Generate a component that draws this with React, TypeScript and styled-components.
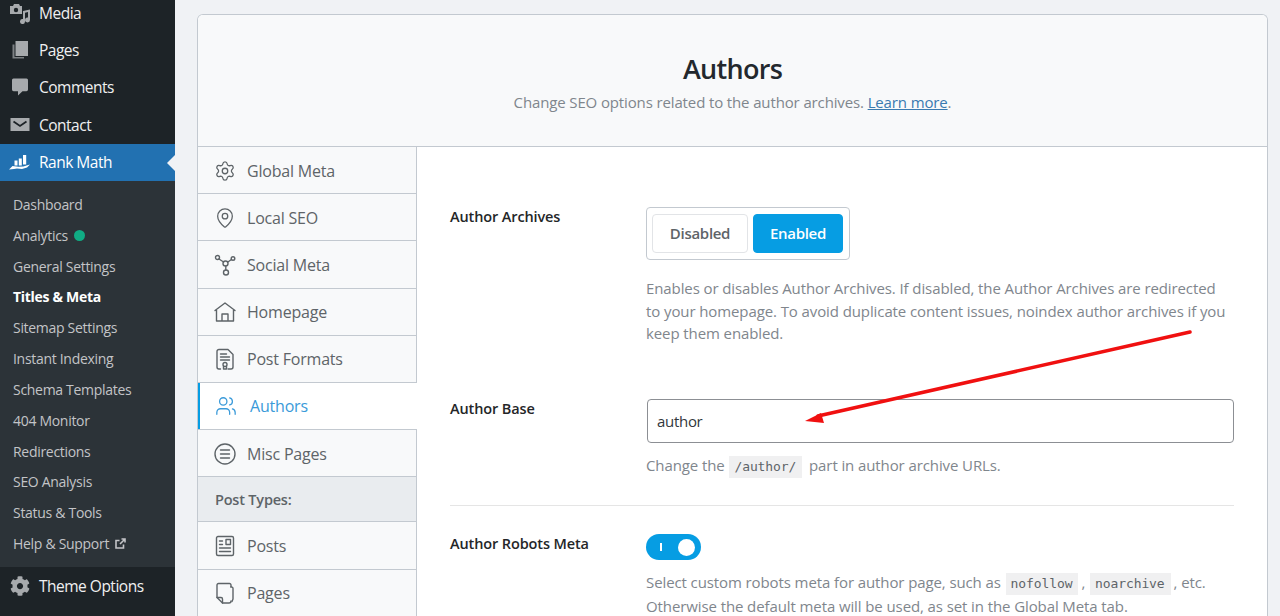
import React from 'react'
import styled, { createGlobalStyle } from 'styled-components'
import { Settings, MapPin, Users } from 'lucide-react'
import { FaCog } from 'react-icons/fa'

const Global = createGlobalStyle`
  html, body { margin: 0; padding: 0; height: 616px; overflow: hidden; background: #f0f2f5; }
  * { box-sizing: border-box; }
  body { font-family: "Open Sans", "Noto Sans", sans-serif; }
`

const Shell = styled.div`
  position: relative;
  display: flex;
  height: 616px;
  overflow: hidden;
`

const Sidebar = styled.nav`
  width: 175px;
  flex: none;
  background: #1d2327;
  margin-top: -6px;
  height: 622px;
  overflow: hidden;
`

const MainItem = styled.div<{ $active?: boolean }>`
  position: relative;
  display: flex;
  align-items: center;
  height: 37.4px;
  padding-left: 39px;
  font-size: 15.5px;
  letter-spacing: -0.5px;
  color: #f0f0f1;
  background: ${p => (p.$active ? '#2271b1' : 'transparent')};
  ${p => p.$active && `color: #fff;`}
  &::after {
    content: '';
    display: ${p => (p.$active ? 'block' : 'none')};
    position: absolute;
    right: 0;
    top: 11px;
    border: 8px solid transparent;
    border-right-color: #f0f2f5;
    border-left-width: 0;
  }
`

const MainIcon = styled.span`
  position: absolute;
  left: 9px;
  top: 0;
  bottom: 0;
  width: 22px;
  display: flex;
  align-items: center;
  justify-content: center;
  color: #a7aaad;
`

const SubMenu = styled.div`
  background: #2c3338;
  padding: 8px 0;
`

const SubItem = styled.div<{ $current?: boolean }>`
  display: flex;
  align-items: center;
  gap: 6px;
  height: 30.85px;
  padding-left: 13px;
  font-size: 14px;
  letter-spacing: -0.3px;
  color: ${p => (p.$current ? '#fff' : '#c3c4c7')};
  font-weight: ${p => (p.$current ? 700 : 400)};
`

const Dot = styled.span`
  width: 11px;
  height: 11px;
  border-radius: 50%;
  background: #10ac84;
`

const Main = styled.main`
  flex: 1;
  padding: 14px 12px 0 22px;
  background: #f0f2f5;
`

const Panel = styled.section`
  border: 1px solid #c3c9d0;
  border-bottom: 0;
  border-radius: 6px 6px 0 0;
  background: #fff;
  height: 640px;
  overflow: hidden;
`

const Header = styled.header`
  height: 132px;
  background: #f8f9fa;
  border-bottom: 1px solid #c3c9d0;
  text-align: center;
  padding-top: 36px;
`

const Title = styled.h1`
  margin: 0;
  font-size: 27px;
  line-height: 36px;
  font-weight: 600;
  letter-spacing: -0.7px;
  color: #23282d;
`

const Lead = styled.p`
  margin: 4px 0 0;
  font-size: 15px;
  line-height: 22px;
  letter-spacing: -0.13px;
  color: #7f868d;
  & a { color: #3a7ab0; text-decoration: underline; }
`

const Body = styled.div`
  display: flex;
`

const Tabs = styled.div`
  width: 219px;
  flex: none;
  border-right: 1px solid #c3c9d0;
`

const Tab = styled.div<{ $active?: boolean }>`
  position: relative;
  display: flex;
  align-items: center;
  gap: ${p => (p.$active ? '13px' : '11px')};
  height: 47.2px;
  padding: 1px 0 0 16px;
  font-size: 16px;
  letter-spacing: -0.2px;
  color: ${p => (p.$active ? '#3a9ad9' : '#5e6468')};
  background: ${p => (p.$active ? '#fff' : '#f8f9fa')};
  border-bottom: 1px solid #c3c9d0;
  ${p => p.$active && `
    margin-right: -1px;
    margin-left: -1px;
    padding: 0 0 0 18px;
    box-shadow: inset 3px 0 0 #069de3;
  `}
`

const TabIcon = styled.span`
  width: 22px;
  height: 22px;
  flex: none;
  display: flex;
  align-items: center;
  justify-content: center;
`

const TabHeading = styled.div`
  display: flex;
  align-items: center;
  height: 45px;
  padding-left: 17px;
  font-size: 14.5px;
  font-weight: 600;
  letter-spacing: -0.2px;
  color: #5e6468;
  background: #e9ecef;
  border-bottom: 1px solid #c3c9d0;
`

const Content = styled.div`
  flex: 1;
  padding: 60px 33px 0 33px;
`

const Field = styled.div<{ $gap: number }>`
  display: grid;
  grid-template-columns: 196px 1fr;
  margin-top: ${p => p.$gap}px;
`

const Label = styled.div`
  font-size: 14.5px;
  font-weight: 600;
  line-height: 20px;
  letter-spacing: -0.12px;
  color: #242628;
`

const Segments = styled.div`
  display: inline-flex;
  gap: 5px;
  padding: 6px 6px 6px 5px;
  border: 1px solid #c3c9d0;
  border-radius: 4px;
`

const Segment = styled.div<{ $on?: boolean }>`
  display: flex;
  align-items: center;
  justify-content: center;
  width: ${p => (p.$on ? '90px' : '96px')};
  height: 39px;
  padding-bottom: 1px;
  border-radius: 4px;
  font-size: 15px;
  font-weight: 600;
  letter-spacing: -0.3px;
  color: ${p => (p.$on ? '#fff' : '#5e6468')};
  background: ${p => (p.$on ? '#069de3' : '#fff')};
  border: 1px solid ${p => (p.$on ? '#069de3' : '#e2e4e7')};
`

const Help = styled.p<{ $gap: number }>`
  margin: ${p => p.$gap}px 0 0;
  font-size: 15px;
  line-height: 22.7px;
  letter-spacing: -0.1px;
  white-space: nowrap;
  color: #7f868d;
`

const Input = styled.div`
  display: flex;
  align-items: center;
  height: 44px;
  margin-left: 1px;
  padding-left: 9px;
  border: 1px solid #8c8f94;
  border-radius: 4px;
  font-size: 15px;
  letter-spacing: -0.3px;
  color: #32373c;
`

const Code = styled.code`
  display: inline-block;
  margin: 0 3px 0 1px;
  padding: 0 6px 0 5px;
  font-family: "DejaVu Sans Mono", "Liberation Mono", monospace;
  font-size: 13px;
  line-height: 22px;
  color: #5e6468;
  background: #f0f0f1;
`

const Rule = styled.hr`
  margin: 27px 0 0;
  border: 0;
  border-top: 1px solid #e5e5e5;
`

const Toggle = styled.div`
  position: relative;
  width: 55px;
  height: 26px;
  border-radius: 13px;
  background: #069de3;
  &::before {
    content: '';
    position: absolute;
    left: 14px;
    top: 9px;
    width: 2px;
    height: 8px;
    background: #fff;
  }
  &::after {
    content: '';
    position: absolute;
    right: 6px;
    top: 4.500px;
    width: 17px;
    height: 17px;
    border-radius: 50%;
    background: #fff;
  }
`

const Arrow = styled.svg`
  position: absolute;
  left: 790px;
  top: 320px;
`

const line = {
  fill: 'none',
  stroke: 'currentColor',
  strokeWidth: 1.4,
  strokeLinecap: 'round' as const,
  strokeLinejoin: 'round' as const,
}

const Line = (p: { children: React.ReactNode }) => (
  <svg width="22" height="22" viewBox="0 0 22 22" {...line}>
    {p.children}
  </svg>
)

const SocialIcon = () => (
  <Line>
    <circle cx="3.500" cy="3.500" r="2" />
    <circle cx="19" cy="4.500" r="1.800" />
    <circle cx="12" cy="18.500" r="2.500" />
    <circle cx="11.500" cy="9.500" r="2.500" />
    <path d="M5 5l4.600 3M17.400 5.500l-3.800 2.800M11.800 12v4" />
  </Line>
)

const HomeIcon = () => (
  <Line>
    <path d="M1 9.500L11 2l10 7.500M2.500 9v11h17V9M8 20v-7h6v7" />
  </Line>
)

const FormatIcon = () => (
  <Line>
    <path d="M14 1.500H5a2 2 0 0 0-2 2v15.500a2 2 0 0 0 2 2h1.500M14 21h3a2 2 0 0 0 2-2V6.500L14 1.500" />
    <path d="M6.500 6h6M6.500 9h9M6.500 12h9" />
    <circle cx="11" cy="16.500" r="2" />
    <path d="M9.500 18.500V21h3v-2.500" />
  </Line>
)

const MiscIcon = () => (
  <Line>
    <circle cx="11" cy="11" r="10" />
    <path d="M6.500 7h9M6.500 11h9M6.500 15h9" />
  </Line>
)

const PostsIcon = () => (
  <Line>
    <rect x="2.500" y="1.500" width="17" height="19" rx="1.500" />
    <path d="M5.500 6h3M5.500 9.500h3M12 4.500h4.500v5H12zM5.500 13h11M5.500 16.500h11" />
  </Line>
)

const PagesIcon = () => (
  <Line>
    <path d="M17 5V3a1.500 1.500 0 0 0-1.500-1.500H4.500A1.500 1.500 0 0 0 3 3v12.500L8.500 21H15a2 2 0 0 0 2-2" />
    <path d="M3 15.500h4a1.500 1.500 0 0 1 1.500 1.500v4" />
    <path d="M17 5a1.500 1.500 0 0 1 2 1.500V17l-1 2.500" />
  </Line>
)

const MediaIcon = () => (
  <svg width="22" height="22" viewBox="0 0 22 22" fill="currentColor">
    <path d="M1 4h3l1-2h5l1 2h2v8H1z" />
    <circle cx="7" cy="8" r="2.200" fill="#1d2327" />
    <path d="M14 9l7-1.500V18a2.500 2.500 0 1 1-2-2.400V10l-3 .7v8.800a2.500 2.500 0 1 1-2-2.400z" />
  </svg>
)

const PagesMenuIcon = () => (
  <svg width="22" height="22" viewBox="0 0 22 22" fill="currentColor">
    <path d="M6.500 2H19v15H6.500z" />
    <path d="M3.500 5.500h2V18H15v1.500H3.500z" opacity=".7" />
  </svg>
)

const CommentIcon = () => (
  <svg width="22" height="22" viewBox="0 0 22 22" fill="currentColor">
    <path d="M5 2.500h12A1.800 1.800 0 0 1 19 4.500v9a1.800 1.800 0 0 1-2 1.800h-3.500L9 19.500v-4.200H5a1.800 1.800 0 0 1-2-1.800v-9A1.800 1.800 0 0 1 5 2.500z" />
  </svg>
)

const MailIcon = () => (
  <svg width="22" height="22" viewBox="0 0 22 22" fill="currentColor">
    <path d="M1.500 4h19v13h-19z" />
    <path d="M4.500 7.500L11 12l6.500-4.500" fill="none" stroke="#1d2327" strokeWidth="1.800" />
  </svg>
)

const RankIcon = () => (
  <svg width="22" height="22" viewBox="0 0 22 22" fill="#fff">
    <path d="M5.500 9.500h3v5h-3zM9.800 7.500h3v7h-3zM14 4h3.200v9.500H14z" />
    <path d="M0 18.500l3.500-3.500 6 .8 5-.3 3-1 3.500-1-3 3-5 1.500-5-.5-3 .5z" />
  </svg>
)

const LinkIcon = () => (
  <svg width="11" height="11" viewBox="0 0 11 11" fill="none" stroke="currentColor" strokeWidth="1.600">
    <path d="M8.500 6.500V10H1V2.500h3.500M5 6l5-5M6.500 1H10v3.500" />
  </svg>
)

const App = () => (
  <Shell>
    <Global />
    <Sidebar>
      <MainItem><MainIcon><MediaIcon /></MainIcon>Media</MainItem>
      <MainItem><MainIcon><PagesMenuIcon /></MainIcon>Pages</MainItem>
      <MainItem><MainIcon><CommentIcon /></MainIcon>Comments</MainItem>
      <MainItem><MainIcon><MailIcon /></MainIcon>Contact</MainItem>
      <MainItem $active><MainIcon><RankIcon /></MainIcon>Rank Math</MainItem>
      <SubMenu>
        <SubItem>Dashboard</SubItem>
        <SubItem>Analytics <Dot /></SubItem>
        <SubItem>General Settings</SubItem>
        <SubItem $current>Titles &amp; Meta</SubItem>
        <SubItem>Sitemap Settings</SubItem>
        <SubItem>Instant Indexing</SubItem>
        <SubItem>Schema Templates</SubItem>
        <SubItem>404 Monitor</SubItem>
        <SubItem>Redirections</SubItem>
        <SubItem>SEO Analysis</SubItem>
        <SubItem>Status &amp; Tools</SubItem>
        <SubItem>Help &amp; Support <LinkIcon /></SubItem>
      </SubMenu>
      <MainItem><MainIcon><FaCog size={20} /></MainIcon>Theme Options</MainItem>
    </Sidebar>
    <Main>
      <Panel>
        <Header>
          <Title>Authors</Title>
          <Lead>Change SEO options related to the author archives. <a>Learn more</a>.</Lead>
        </Header>
        <Body>
          <Tabs>
            <Tab><TabIcon><Settings size={22} strokeWidth={1.4} /></TabIcon>Global Meta</Tab>
            <Tab><TabIcon><MapPin size={22} strokeWidth={1.4} /></TabIcon>Local SEO</Tab>
            <Tab><TabIcon><SocialIcon /></TabIcon>Social Meta</Tab>
            <Tab><TabIcon><HomeIcon /></TabIcon>Homepage</Tab>
            <Tab><TabIcon><FormatIcon /></TabIcon>Post Formats</Tab>
            <Tab $active><TabIcon><Users size={22} strokeWidth={1.4} /></TabIcon>Authors</Tab>
            <Tab><TabIcon><MiscIcon /></TabIcon>Misc Pages</Tab>
            <TabHeading>Post Types:</TabHeading>
            <Tab><TabIcon><PostsIcon /></TabIcon>Posts</Tab>
            <Tab><TabIcon><PagesIcon /></TabIcon>Pages</Tab>
          </Tabs>
          <Content>
            <Field $gap={0}>
              <Label>Author Archives</Label>
              <div>
                <Segments>
                  <Segment>Disabled</Segment>
                  <Segment $on>Enabled</Segment>
                </Segments>
                <Help $gap={17}>
                  Enables or disables Author Archives. If disabled, the Author Archives are redirected<br />
                  to your homepage. To avoid duplicate content issues, noindex author archives if you<br />
                  keep them enabled.
                </Help>
              </div>
            </Field>
            <Field $gap={54}>
              <Label>Author Base</Label>
              <div>
                <Input>author</Input>
                <Help $gap={11}>
                  Change the <Code>/author/</Code> part in author archive URLs.
                </Help>
              </div>
            </Field>
            <Rule />
            <Field $gap={28}>
              <Label>Author Robots Meta</Label>
              <div>
                <Toggle />
                <Help $gap={11}>
                  Select custom robots meta for author page, such as <Code>nofollow</Code>, <Code>noarchive</Code>, etc.<br />
                  Otherwise the default meta will be used, as set in the Global Meta tab.
                </Help>
              </div>
            </Field>
          </Content>
        </Body>
      </Panel>
    </Main>
    <Arrow width="410" height="110" viewBox="0 0 410 110">
      <path d="M400 12L28 96" stroke="#f01010" strokeWidth="3.500" strokeLinecap="round" />
      <path d="M15 101L31 93L34 103z" fill="#f01010" />
    </Arrow>
  </Shell>
)

export default App
